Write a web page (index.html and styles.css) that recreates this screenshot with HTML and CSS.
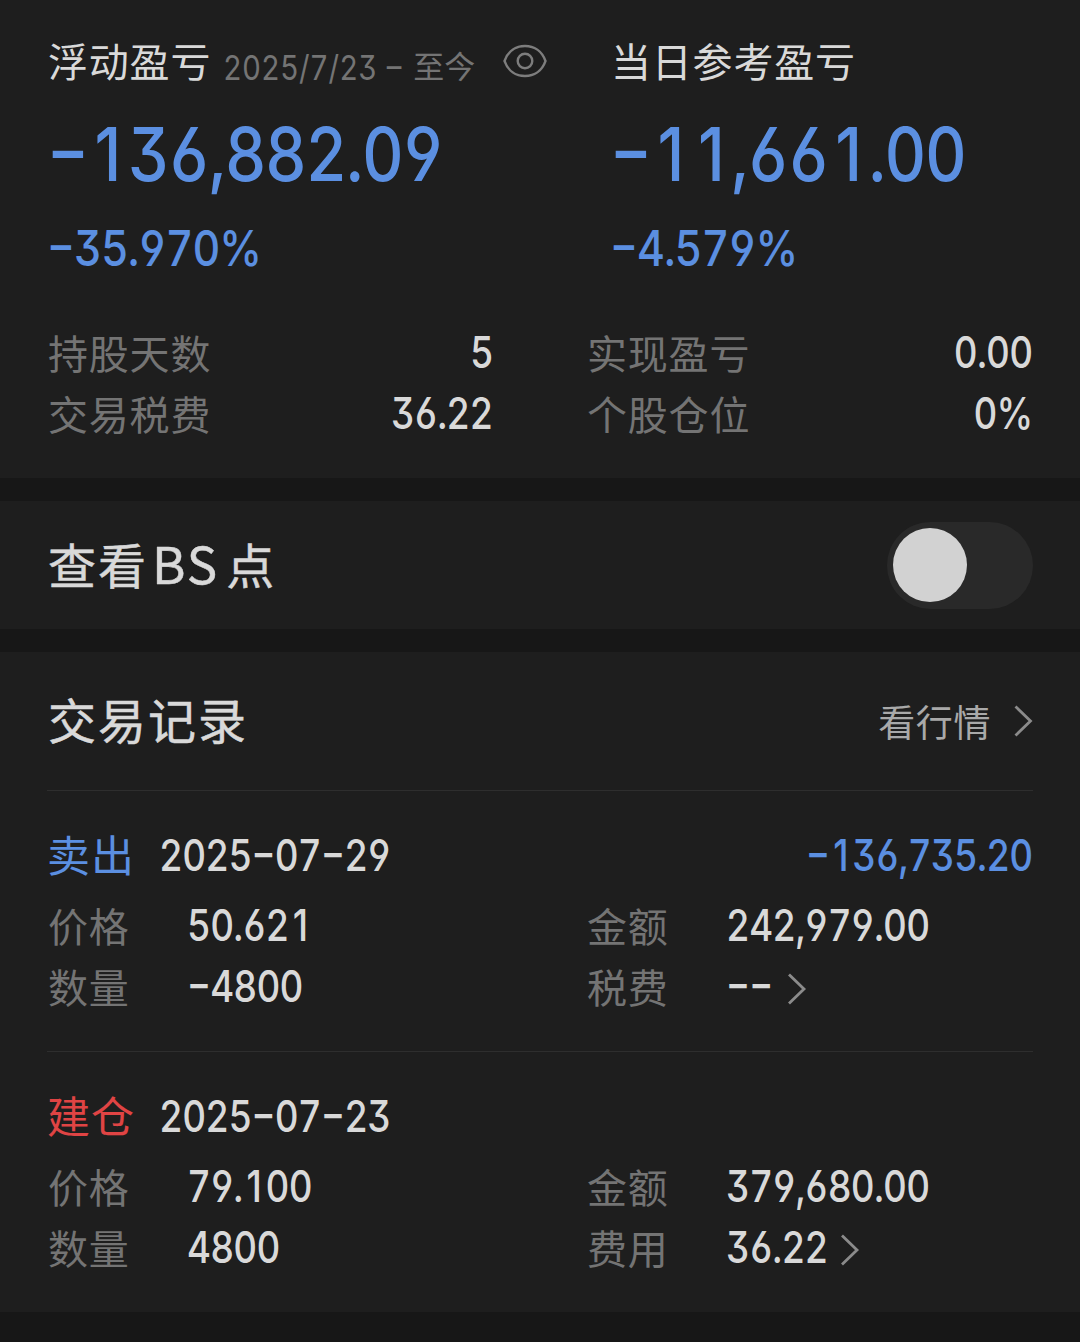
FILE: index.html
```
<!DOCTYPE html>
<html lang="zh-CN">

<head>
    <meta charset="UTF-8">
    <meta name="viewport" content="width=device-width, initial-scale=1.0">
    <title>交易记录</title>
    <link rel="stylesheet" href="styles.css">
</head>

<body>
    <section class="summary">
        <div class="profit">
            <div class="profit-item">
                <h2 class="profit-title">浮动盈亏
                    <span class="period"><span class="num">2025/7/23 –</span><span class="today">至今</span></span>
                    <svg class="eye" width="44" height="34" viewBox="0 0 44 34" fill="none" stroke="#7d7d7d" stroke-width="2.4">
                        <path d="M1.5 17C5 7 13 2 22 2s17 5 20.500 15C39 27 31 32 22 32S5 27 1.500 17z" />
                        <circle cx="22" cy="17" r="7.300" />
                    </svg>
                </h2>
                <p class="amount"><span class="num">−<span class="one">1</span>36,882.09</span></p>
                <p class="percent"><span class="num">−35.970%</span></p>
            </div>
            <div class="profit-item">
                <h2 class="profit-title">当日参考盈亏</h2>
                <p class="amount"><span class="num">−<span class="one">1</span><span class="one">1</span>,66<span class="one">1</span>.00</span></p>
                <p class="percent"><span class="num">−4.579%</span></p>
            </div>
        </div>
        <div class="stats">
            <div class="stat"><span class="label">持股天数</span><span class="num">5</span></div>
            <div class="stat"><span class="label">实现盈亏</span><span class="num">0.00</span></div>
            <div class="stat"><span class="label">交易税费</span><span class="num">36.22</span></div>
            <div class="stat"><span class="label">个股仓位</span><span class="num">0%</span></div>
        </div>
    </section>

    <section class="bs">
        <h2 class="heading">查看<span class="latin">BS</span>点</h2>
        <div class="switch"><div class="knob"></div></div>
    </section>

    <section class="records">
        <div class="records-head">
            <h2 class="heading">交易记录</h2>
            <a class="quote" href="#">看行情
                <svg width="20" height="32" viewBox="0 0 20 32" fill="none" stroke="#8b8b8b" stroke-width="2.800"><path d="M2.500 1.500L17.500 16L2.500 30.500" /></svg>
            </a>
        </div>

        <div class="trade">
            <div class="trade-head">
                <span class="type sell">卖出</span>
                <span class="num">2025−07−29</span>
                <span class="num result">−<span class="one">1</span>36,735.20</span>
            </div>
            <div class="details">
                <div class="detail"><span class="label">价格</span><span class="num">50.62<span class="one">1</span></span></div>
                <div class="detail"><span class="label">金额</span><span class="num">242,979.00</span></div>
                <div class="detail"><span class="label">数量</span><span class="num">−4800</span></div>
                <div class="detail"><span class="label">税费</span><span class="num dashes">−−</span>
                    <svg class="arrow" width="20" height="32" viewBox="0 0 20 32" fill="none" stroke="#8b8b8b" stroke-width="2.800"><path d="M2 1.500L17 16L2 30.500" /></svg>
                </div>
            </div>
        </div>

        <div class="trade">
            <div class="trade-head">
                <span class="type open">建仓</span>
                <span class="num">2025−07−23</span>
            </div>
            <div class="details">
                <div class="detail"><span class="label">价格</span><span class="num">79.<span class="one">1</span>00</span></div>
                <div class="detail"><span class="label">金额</span><span class="num">379,680.00</span></div>
                <div class="detail"><span class="label">数量</span><span class="num">4800</span></div>
                <div class="detail"><span class="label">费用</span><span class="num fee">36.22</span>
                    <svg class="arrow" width="20" height="32" viewBox="0 0 20 32" fill="none" stroke="#8b8b8b" stroke-width="2.800"><path d="M2 1.500L17 16L2 30.500" /></svg>
                </div>
            </div>
        </div>
    </section>
</body>

</html>
```
FILE: styles.css
```
* {
    margin: 0;
    padding: 0;
    box-sizing: border-box;
}

body {
    background-color: #171717;
    color: #d9d9d9;
    font-family: 'Noto Sans CJK SC', sans-serif;
    white-space: nowrap;
}

section {
    background-color: #1e1e1e;
    margin-bottom: 23px;
    padding: 0 47px;
}

h2 {
    font-weight: 400;
}

/* narrow digits: flat 3, open 6 and 9 */
.num {
    display: inline-block;
    font-family: 'Inter', sans-serif;
    font-size: 43.5px;
    font-weight: 500;
    letter-spacing: -.022em;
    font-feature-settings: "tnum", "case", "cv03", "cv04", "cv09";
    transform: scaleX(.85);
    transform-origin: left center;
}

/* 1 without a foot, in a cell as wide as the other digits */
.one {
    display: inline-block;
    width: .626em;
    padding-left: .11em;
    font-feature-settings: "tnum" 0;
}

.summary {
    height: 478px;
    padding-top: 30px;
}

.profit {
    display: grid;
    grid-template-columns: 563px 1fr;
    height: 292px;
}

.profit-title {
    display: flex;
    align-items: center;
    height: 60px;
    font-size: 40px;
    letter-spacing: .8px;
    padding-left: 1px;
}

.period {
    display: flex;
    flex: none;
    align-items: center;
    width: 292px;
    padding: 14px 0 0 12px;
    color: #747474;
}

.period .num {
    width: 190px;
    font-size: 34px;
    font-weight: 400;
    letter-spacing: 0;
    word-spacing: 2px;
    font-feature-settings: "tnum", "cv03", "cv04", "cv09";
    transform: scaleX(.862);
}

.today {
    margin-bottom: 5px;
    font-size: 31px;
    letter-spacing: 0;
}

.eye {
    flex: none;
    margin-top: 2px;
}

.amount,
.percent {
    display: flex;
    align-items: center;
    color: #5b8fe1;
}

.amount {
    height: 127px;
}

.amount .num {
    font-size: 74px;
    transform: scaleX(.873);
}

.percent {
    height: 61px;
}

.percent .num {
    font-size: 49.5px;
    transform: scaleX(.87);
}

.stats {
    display: grid;
    grid-template-columns: 446px 446px;
    column-gap: 93px;
}

.stat,
.detail {
    display: flex;
    align-items: center;
    height: 61px;
}

.stat {
    justify-content: space-between;
}

.stat .num {
    padding-bottom: 2px;
    transform-origin: right center;
}

.label {
    font-size: 40px;
    letter-spacing: .8px;
    color: #747474;
    padding: 0 0 1px 1px;
}

.bs {
    display: flex;
    align-items: center;
    justify-content: space-between;
    height: 128px;
}

.heading {
    font-size: 48px;
    letter-spacing: 2px;
    padding: 0 0 6px 1px;
    -webkit-text-stroke: .5px currentColor;
}

.latin {
    font-size: 51px;
    margin: 0 7px 0 4px;
}

.switch {
    width: 146px;
    height: 87px;
    padding: 6px;
    border-radius: 44px;
    background-color: #292929;
}

.knob {
    width: 74px;
    height: 74px;
    border-radius: 50%;
    background-color: #d2d2d2;
}

.records {
    height: 660px;
}

.records-head {
    display: flex;
    align-items: center;
    justify-content: space-between;
    height: 138px;
}

.quote {
    display: flex;
    align-items: center;
    gap: 22px;
    color: #a9a9a9;
    font-size: 37px;
    letter-spacing: .6px;
    text-decoration: none;
}

.trade {
    height: 261px;
    padding-top: 22px;
    border-top: 1px solid #2e2e2e;
}

.trade-head {
    display: flex;
    align-items: center;
    height: 82px;
}

.trade-head .num {
    padding-top: 1px;
}

.type {
    width: 112px;
    font-size: 43px;
    letter-spacing: 1px;
    padding-bottom: 2px;
}

.sell,
.result {
    color: #5b8fe1;
}

.open {
    color: #e04444;
}

.result {
    margin-left: auto;
    transform-origin: right center;
}

.details {
    display: grid;
    grid-template-columns: 539px 1fr;
}

.detail .label {
    width: 140px;
}

.detail .num {
    padding-bottom: 1px;
}

.arrow {
    margin-top: 4px;
}

.fee {
    width: 114px;
}

.dashes {
    width: 61px;
}
```
